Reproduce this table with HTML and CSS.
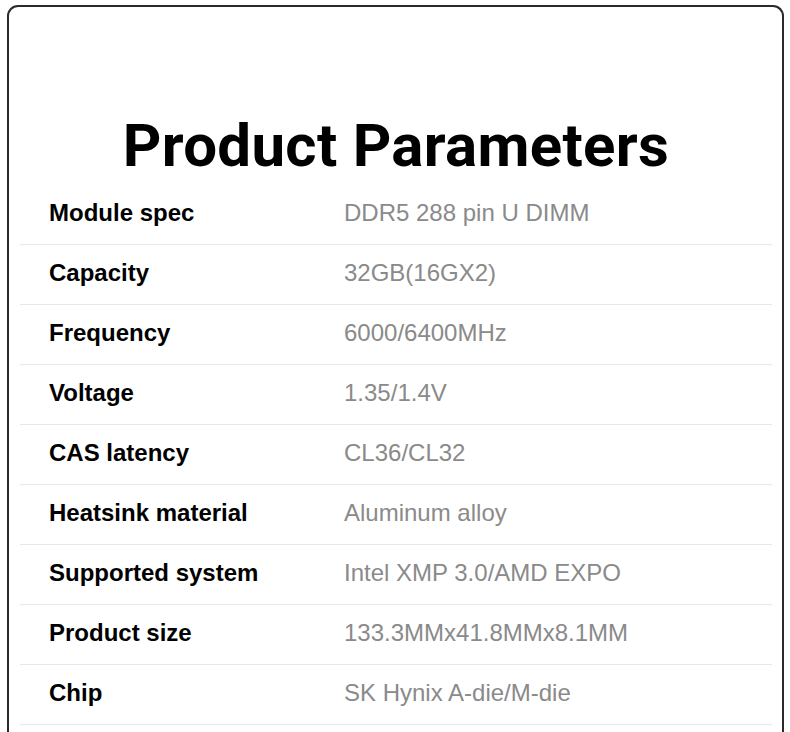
FILE: index.html
```html
<!DOCTYPE html>
<html lang="en">
<head>
<meta charset="utf-8">
<title>Product Parameters</title>
<link rel="stylesheet" href="styles.css">
</head>
<body>
<div class="card">
  <h1 class="title">Product Parameters</h1>
  <div class="params">
    <div class="row"><div class="label">Module spec</div><div class="value">DDR5 288 pin U DIMM</div></div>
    <div class="row"><div class="label">Capacity</div><div class="value">32GB(16GX2)</div></div>
    <div class="row"><div class="label">Frequency</div><div class="value">6000/6400MHz</div></div>
    <div class="row"><div class="label">Voltage</div><div class="value">1.35/1.4V</div></div>
    <div class="row"><div class="label">CAS latency</div><div class="value">CL36/CL32</div></div>
    <div class="row"><div class="label">Heatsink material</div><div class="value">Aluminum alloy</div></div>
    <div class="row"><div class="label">Supported system</div><div class="value">Intel XMP 3.0/AMD EXPO</div></div>
    <div class="row"><div class="label">Product size</div><div class="value">133.3MMx41.8MMx8.1MM</div></div>
    <div class="row"><div class="label">Chip</div><div class="value">SK Hynix A-die/M-die</div></div>
  </div>
</div>
</body>
</html>
```
FILE: styles.css
```css
html, body {
  margin: 0;
  padding: 0;
  background: #fff;
}
body {
  padding: 5px 6px 0 7px;
  font-family: "Liberation Sans", Arial, sans-serif;
}
.card {
  border: 2px solid #2a2a2a;
  border-bottom: none;
  border-radius: 11px 11px 0 0;
  padding: 103px 10px 40px 11px;
}
.title {
  margin: 0 0 3px;
  font-family: Roboto, "DejaVu Sans", sans-serif;
  font-weight: 700;
  font-size: 60px;
  line-height: 72px;
  text-align: center;
  color: #000;
  letter-spacing: 0.3px;
}
.params {
  display: flex;
  flex-direction: column;
}
.row {
  display: flex;
  align-items: baseline;
  padding: 14px 0 18px;
  border-bottom: 1px solid #e8e8e8;
  line-height: 27px;
  font-size: 24px;
}
.label {
  width: 295px;
  padding-left: 29px;
  font-weight: 700;
  color: #000;
}
.value {
  color: #8a8a8a;
}
```
